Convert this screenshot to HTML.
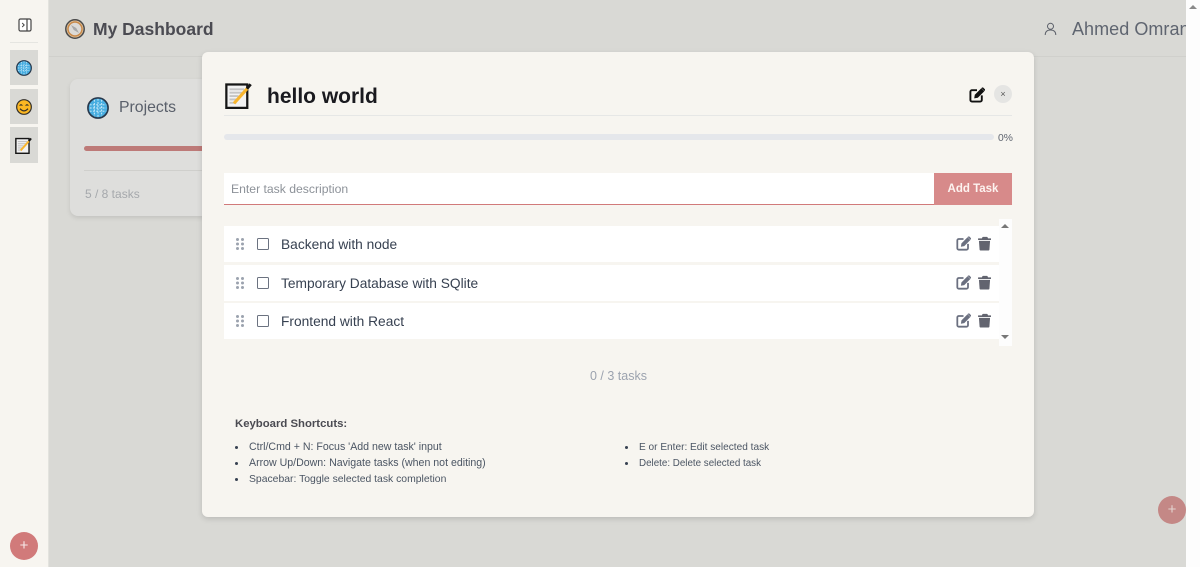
<!DOCTYPE html>
<html><head><meta charset="utf-8"><style>
*{box-sizing:border-box}
html,body{margin:0;padding:0;width:1200px;height:567px;overflow:hidden;background:#d9d9d5;font-family:"Liberation Sans",sans-serif}
.a{position:absolute}
.t{position:absolute;white-space:nowrap;line-height:1}
svg{position:absolute;display:block}
.row{position:absolute;left:224px;width:775px;height:36px;background:#fff}
.li{position:absolute;white-space:nowrap;font-size:10.6px;color:#4b5563;line-height:1}
.dot{position:absolute;width:3px;height:3px;border-radius:50%;background:#374151}
.task{font-size:13.75px;color:#374151}
.cb{position:absolute;left:257px;width:12px;height:12px;border:1.5px solid #6b7280;border-radius:1.5px}
</style></head><body>
<svg width="0" height="0" style="position:absolute"><defs>
<symbol id="edit" viewBox="0 0 16 16"><path d="M8 3.2H3A1.6 1.6 0 0 0 1.4 4.800v8.200A1.600 1.600 0 0 0 3 14.600h8.200a1.600 1.600 0 0 0 1.600-1.600V8.400" fill="none" stroke="currentColor" stroke-width="1.900"/><path d="M5.800 7.800 12.300 1.300l3 3-6.500 6.500-3.600.6z" fill="currentColor"/><path d="M12.900.7c.5-.4 1.100-.4 1.500 0l1.400 1.400c.4.400.4 1 0 1.500l-.4.400-3-3z" fill="currentColor"/></symbol>
<symbol id="trash" viewBox="0 0 14 16"><path d="M0.500 2.500h3.700l.6-1.300c.1-.2.300-.4.600-.4h4.200c.3 0 .5.200.6.400l.6 1.300h3c.3 0 .5.200.5.500v.7c0 .3-.2.500-.5.500H.500C.200 4.200 0 4 0 3.700V3c0-.3.200-.5.500-.5zM1 5.200h12l-.7 9.200c0 .7-.6 1.200-1.300 1.200H3c-.7 0-1.300-.5-1.300-1.200z" fill="currentColor"/></symbol>
<symbol id="globe" viewBox="0 0 24 24"><circle cx="12" cy="12" r="11" fill="#47ade0" stroke="#27384c" stroke-width="1.800"/><path d="M3 8.500h18M3 12h18M3 15.500h18M8 3v18M12 2v20M16 3v18" stroke="#d6effa" stroke-width="1" fill="none" stroke-dasharray="2 1.500"/></symbol>
<symbol id="memo" viewBox="0 0 24 24"><rect x="1.200" y="2.200" width="18.600" height="20.800" fill="#f2f2f2" stroke="#161616" stroke-width="2"/><path d="M4 6.500h13M4 9.500h11M4 12.500h8M4 15.500h6M4 18.500h6" stroke="#c4c4c4" stroke-width="1.600"/><path d="M8 19 20 5.500" stroke="#f8b52e" stroke-width="2.800"/><path d="M19.500 6 22.800 2" stroke="#161616" stroke-width="2.600"/></symbol>
</defs></svg>

<!-- sidebar -->
<div class="a" style="left:0;top:0;width:49px;height:567px;background:#f7f5f0;border-right:1px solid #e3e3de"></div>
<svg style="left:18px;top:18px" width="14" height="14" viewBox="0 0 14 14"><rect x="1" y="1" width="12" height="12" rx="1.500" fill="#fff" stroke="#444" stroke-width="1.200"/><path d="M9 1v12" stroke="#444" stroke-width="1.200"/><path d="M4.200 5 6.200 7 4.200 9" fill="none" stroke="#444" stroke-width="1"/></svg>
<div class="a" style="left:10px;top:42px;width:28px;height:1px;background:#e5e5e1"></div>
<div class="a" style="left:10px;top:50px;width:28px;height:35px;background:#d9d9d5"></div>
<div class="a" style="left:10px;top:89px;width:28px;height:35px;background:#d9d9d5"></div>
<div class="a" style="left:10px;top:127px;width:28px;height:36px;background:#d9d9d5"></div>
<svg style="left:16px;top:60px" width="16" height="16"><use href="#globe" width="16" height="16"/></svg>
<svg style="left:16px;top:99px" width="16" height="16" viewBox="0 0 24 24"><circle cx="12" cy="12" r="11" fill="#fcb722" stroke="#33302a" stroke-width="1.800"/><path d="M5.500 10q2-3 4 0M14.500 10q2-3 4 0" fill="none" stroke="#33302a" stroke-width="1.800"/><path d="M6 14.500q6 6.500 12 0" fill="none" stroke="#33302a" stroke-width="1.900"/></svg>
<svg style="left:15px;top:137px" width="17" height="17"><use href="#memo" width="17" height="17"/></svg>
<div class="a" style="left:10px;top:532px;width:28px;height:28px;border-radius:50%;background:#d17a7a"></div>
<div class="t" style="left:10px;top:532px;width:28px;height:28px;line-height:28px;text-align:center;color:#f6e8e8;font-size:15px">+</div>

<!-- header -->
<svg style="left:65px;top:19px" width="20" height="20" viewBox="0 0 20 20"><circle cx="10" cy="10" r="9.200" fill="#e4c9a4" stroke="#4a4a4a" stroke-width="1.500"/><circle cx="10" cy="10" r="7" fill="#dcdad6" stroke="#c98a4a" stroke-width="1.500"/><path d="M6 6 11.200 9 14 14 8.800 11z" fill="#a8a8a8"/></svg>
<div class="t" style="left:93px;top:21px;font-size:17.5px;font-weight:700;color:#4b4b52">My Dashboard</div>
<svg style="left:1044px;top:22px" width="13" height="14" viewBox="0 0 13 14"><circle cx="6.500" cy="4.300" r="3" fill="none" stroke="#5b5f69" stroke-width="1"/><path d="M1.200 13c0-3.200 2-5 5.300-5s5.300 1.800 5.300 5" fill="none" stroke="#5b5f69" stroke-width="1"/></svg>
<div class="t" style="left:1072px;top:20px;font-size:18px;color:#5f6570;letter-spacing:.05px">Ahmed Omran</div>
<div class="a" style="left:49px;top:56px;width:1137px;height:1px;background:#d0d0cc"></div>

<!-- projects card -->
<div class="a" style="left:70px;top:79px;width:140px;height:137px;background:#dededc;border-radius:8px;box-shadow:0 2px 5px rgba(0,0,0,.1)"></div>
<svg style="left:87px;top:97px" width="22" height="22"><use href="#globe" width="22" height="22"/></svg>
<div class="t" style="left:119px;top:100px;font-size:15.8px;color:#5a606b">Projects</div>
<div class="a" style="left:84px;top:146px;width:125px;height:5px;border-radius:3px 0 0 3px;background:#bd7a78"></div>
<div class="a" style="left:84px;top:170px;width:125px;height:1px;background:#cfcfcc"></div>
<div class="t" style="left:85px;top:188px;font-size:12px;color:#a5a8ac">5 / 8 tasks</div>

<!-- scrollbar -->
<div class="a" style="left:1186px;top:0;width:14px;height:567px;background:#fdfdfd"></div>
<div class="a" style="left:1189px;top:5px;width:0;height:0;border-left:4px solid transparent;border-right:4px solid transparent;border-bottom:4px solid #8a8a8a"></div>
<div class="a" style="left:1158px;top:496px;width:28px;height:28px;border-radius:50%;background:#c48886"></div>
<div class="t" style="left:1158px;top:496px;width:28px;height:28px;line-height:28px;text-align:center;color:#e3d3cf;font-size:15px">+</div>

<!-- modal -->
<div class="a" style="left:202px;top:52px;width:832px;height:465px;background:#f7f5f0;border-radius:6px;box-shadow:0 2px 6px rgba(0,0,0,.14)"></div>
<svg style="left:225px;top:82px" width="27" height="27"><use href="#memo" width="27" height="27"/></svg>
<div class="t" style="left:267px;top:86px;font-size:21px;font-weight:700;color:#1a1a1f">hello world</div>
<svg style="left:969px;top:87px;color:#111" width="16" height="16"><use href="#edit" width="16" height="16"/></svg>
<div class="a" style="left:994px;top:85px;width:18px;height:18px;border-radius:50%;background:#e5e5e3"></div>
<div class="t" style="left:994px;top:85px;width:18px;line-height:18px;text-align:center;font-size:9px;color:#555">×</div>
<div class="a" style="left:224px;top:115px;width:788px;height:1px;background:#e6e7e6"></div>
<div class="a" style="left:224px;top:134px;width:770px;height:6px;border-radius:3px;background:#e5e7eb"></div>
<div class="t" style="left:998px;top:134px;font-size:10.3px;color:#5f6570">0%</div>

<div class="a" style="left:224px;top:173px;width:710px;height:32px;background:#fff;border-bottom:1px solid #d17a7a"></div>
<div class="t" style="left:231px;top:183px;font-size:12.2px;color:#8d9299">Enter task description</div>
<div class="a" style="left:934px;top:173px;width:78px;height:32px;background:#d78a8a"></div>
<div class="t" style="left:934px;top:173px;width:78px;line-height:32px;text-align:center;font-size:11.5px;font-weight:700;color:#fdf3f0">Add Task</div>

<!-- list -->
<div class="a" style="left:999px;top:219px;width:13px;height:127px;background:#fdfdfd"></div>
<div class="a" style="left:1001px;top:224px;width:0;height:0;border-left:4.5px solid transparent;border-right:4.5px solid transparent;border-bottom:4.5px solid #777"></div>
<div class="a" style="left:1001px;top:335px;width:0;height:0;border-left:4.5px solid transparent;border-right:4.5px solid transparent;border-top:4.5px solid #777"></div>

<div class="row" style="top:226px"></div>
<div class="row" style="top:265px"></div>
<div class="row" style="top:303px"></div>

<svg style="left:236px;top:238px" width="8" height="12" fill="#9ca3af"><circle cx="1.500" cy="1.500" r="1.500"/><circle cx="6.500" cy="1.500" r="1.500"/><circle cx="1.500" cy="6" r="1.500"/><circle cx="6.500" cy="6" r="1.500"/><circle cx="1.500" cy="10.500" r="1.500"/><circle cx="6.500" cy="10.500" r="1.500"/></svg>
<svg style="left:236px;top:277px" width="8" height="12" fill="#9ca3af"><circle cx="1.500" cy="1.500" r="1.500"/><circle cx="6.500" cy="1.500" r="1.500"/><circle cx="1.500" cy="6" r="1.500"/><circle cx="6.500" cy="6" r="1.500"/><circle cx="1.500" cy="10.500" r="1.500"/><circle cx="6.500" cy="10.500" r="1.500"/></svg>
<svg style="left:236px;top:315px" width="8" height="12" fill="#9ca3af"><circle cx="1.500" cy="1.500" r="1.500"/><circle cx="6.500" cy="1.500" r="1.500"/><circle cx="1.500" cy="6" r="1.500"/><circle cx="6.500" cy="6" r="1.500"/><circle cx="1.500" cy="10.500" r="1.500"/><circle cx="6.500" cy="10.500" r="1.500"/></svg>

<div class="cb" style="top:238px"></div>
<div class="cb" style="top:277px"></div>
<div class="cb" style="top:315px"></div>

<div class="t task" style="left:281px;top:238px">Backend with node</div>
<div class="t task" style="left:281px;top:277px">Temporary Database with SQlite</div>
<div class="t task" style="left:281px;top:315px">Frontend with React</div>

<svg style="left:956px;top:236px;color:#6b7080" width="15" height="15"><use href="#edit" width="15" height="15"/></svg>
<svg style="left:956px;top:275px;color:#6b7080" width="15" height="15"><use href="#edit" width="15" height="15"/></svg>
<svg style="left:956px;top:313px;color:#6b7080" width="15" height="15"><use href="#edit" width="15" height="15"/></svg>
<svg style="left:978px;top:236px;color:#62646f" width="13" height="15"><use href="#trash" width="13" height="15"/></svg>
<svg style="left:978px;top:275px;color:#62646f" width="13" height="15"><use href="#trash" width="13" height="15"/></svg>
<svg style="left:978px;top:313px;color:#62646f" width="13" height="15"><use href="#trash" width="13" height="15"/></svg>

<div class="t" style="left:590px;top:370px;font-size:12.5px;color:#9ca3af">0 / 3 tasks</div>

<div class="t" style="left:235px;top:419px;font-size:11.35px;font-weight:700;color:#4b4b52">Keyboard Shortcuts:</div>
<div class="dot" style="left:235px;top:446px"></div>
<div class="dot" style="left:235px;top:462px"></div>
<div class="dot" style="left:235px;top:478px"></div>
<div class="li" style="left:249px;top:442px">Ctrl/Cmd + N: Focus 'Add new task' input</div>
<div class="li" style="left:249px;top:458px">Arrow Up/Down: Navigate tasks (when not editing)</div>
<div class="li" style="left:249px;top:475px;font-size:10.4px">Spacebar: Toggle selected task completion</div>
<div class="dot" style="left:625px;top:446px"></div>
<div class="dot" style="left:625px;top:462px"></div>
<div class="li" style="left:639px;top:443px;font-size:10.1px">E or Enter: Edit selected task</div>
<div class="li" style="left:639px;top:459px;font-size:9.8px">Delete: Delete selected task</div>
</body></html>
